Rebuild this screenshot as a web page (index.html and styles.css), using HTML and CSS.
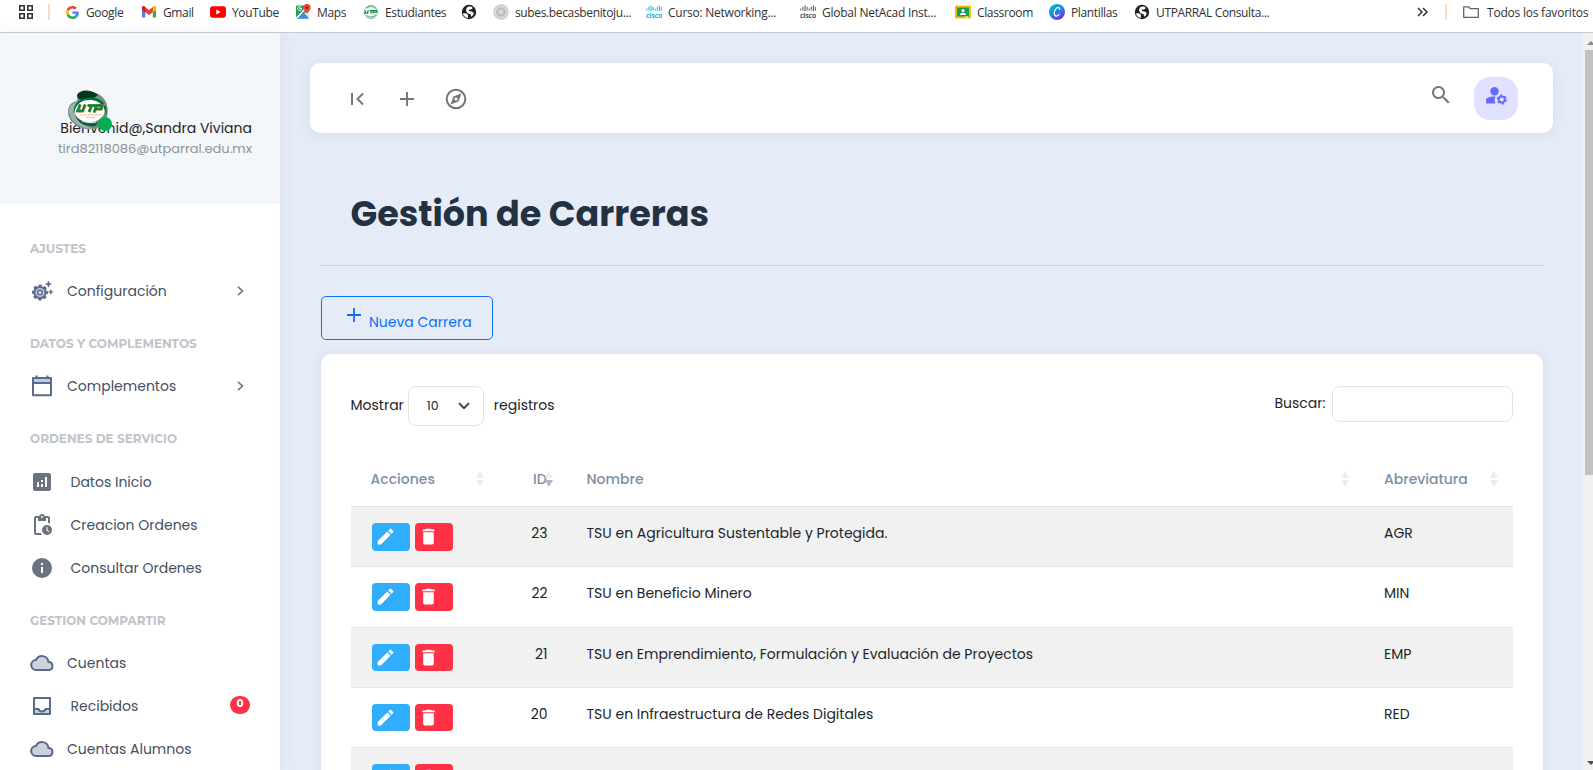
FILE: index.html
```html
<!DOCTYPE html>
<html lang="es">
<head>
<meta charset="utf-8">
<title>Gestión de Carreras</title>
<link rel="stylesheet" href="styles.css">
</head>
<body>
<svg class="defs" width="0" height="0">
  <symbol id="cloud" viewBox="0 0 24 24"><path d="M19.3 10.1A7.5 7.5 0 0 0 5.35 8.05 6 6 0 0 0 6 20h13a5 5 0 0 0 .3-9.9z" fill="#5a6a8a"/><path d="M19 18H6a4 4 0 0 1-.4-7.95l1-.1.5-.95a5.5 5.5 0 0 1 10.3 1.5l.3 1.5 1.5.1A3 3 0 0 1 19 18z" fill="#ccd1dc"/></symbol>
  <symbol id="chevron" viewBox="0 0 10 10"><path d="M2 .8 6.5 5 2 9.2" fill="none" stroke="#5f7a90" stroke-width="1.6"/></symbol>
  <symbol id="pencil" viewBox="0 0 24 24"><path d="M3 17.25V21h3.75L17.81 9.94l-3.75-3.75L3 17.25zM20.71 7.04a1 1 0 0 0 0-1.41l-2.34-2.34a1 1 0 0 0-1.41 0l-1.83 1.83 3.75 3.75 1.83-1.83z" fill="#fff"/></symbol>
  <symbol id="trash" viewBox="0 0 24 24"><path d="M6 19c0 1.1.9 2 2 2h8c1.1 0 2-.9 2-2V7H6v12zM19 4h-3.5l-1-1h-5l-1 1H5v2h14V4z" fill="#fff"/></symbol>
  <symbol id="sort" viewBox="0 0 8 16"><path class="up" d="M0 7 4 0l4 7z"/><path class="down" d="M0 9h8l-4 7z"/></symbol>
  <symbol id="globe" viewBox="0 0 16 16"><circle cx="8" cy="8" r="7.2" fill="#202124"/><path d="M1.8 9.5 5 9.3l2 1.5-.2 3.3C4.500 13.800 2.500 12 1.800 9.500zM7 2.800l3.200-.3 1.600 1.600-1.600 1.300H8.300l-.6 1.500 2.800.5 2.300 1.400-.8 2.400-1.900 1.500-.5-2.400-3-1L5 6.800 5.500 4z" fill="#fff"/></symbol>
  <symbol id="cisco" viewBox="0 0 16 14"><path d="M.8 3.5v2M2.9 1.8v3.7M5 .3v6M7.1 1.8v3.7M9.2 3.5v2M11.3 1.8v3.7M13.4.3v6M15.3 2v3.5" stroke="currentColor" stroke-width="1"/><text x="0" y="12.5" class="cisco-word" textLength="16" lengthAdjust="spacingAndGlyphs">cisco</text></symbol>
</svg>

<nav class="bookmarks">
  <a class="bm"><svg class="i16" viewBox="0 0 16 16"><path d="M1.8 1.8h4.4v4.4H1.8zM9.8 1.8h4.4v4.4H9.8zM1.8 9.8h4.4v4.4H1.8zM9.8 9.8h4.4v4.4H9.8z" fill="none" stroke="#303134" stroke-width="1.6"/></svg></a>
  <i class="bm-sep"></i>
  <a class="bm"><svg class="i14" viewBox="0 0 48 48"><path fill="#EA4335" d="M24 9.5c3.54 0 6.71 1.22 9.21 3.6l6.85-6.85C35.9 2.38 30.47 0 24 0 14.62 0 6.51 5.38 2.56 13.22l7.98 6.19C12.43 13.72 17.74 9.5 24 9.5z"/><path fill="#4285F4" d="M46.98 24.55c0-1.57-.15-3.09-.38-4.55H24v9.02h12.94c-.58 2.96-2.26 5.48-4.78 7.18l7.73 6c4.51-4.18 7.09-10.36 7.09-17.65z"/><path fill="#FBBC05" d="M10.53 28.59a14.5 14.5 0 0 1 0-9.18l-7.98-6.19a24 24 0 0 0 0 21.56l7.98-6.19z"/><path fill="#34A853" d="M24 48c6.48 0 11.93-2.13 15.89-5.81l-7.73-6c-2.15 1.45-4.92 2.3-8.16 2.3-6.26 0-11.57-4.22-13.47-9.91l-7.98 6.19C6.51 42.62 14.62 48 24 48z"/></svg><span>Google</span></a>
  <a class="bm"><svg class="i16" viewBox="0 0 16 16"><path d="M1 13.5V3.8l3.2 2.4v7.3z" fill="#4285f4"/><path d="M11.8 13.5V6.2L15 3.8v9.7z" fill="#34a853"/><path d="M1 6V3.6C1 2.2 2.6 1.8 3.5 2.5L8 5.9l4.5-3.4c.9-.7 2.5-.3 2.5 1.1V6L8 11z" fill="#ea4335"/><path d="M11.8 3v5.4L15 6V3.6c0-1.4-1.6-1.8-2.5-1.1z" fill="#fbbc04"/><path d="M4.2 3v5.4L1 6V3.6c0-1.4 1.6-1.8 2.5-1.1z" fill="#c5221f"/></svg><span>Gmail</span></a>
  <a class="bm"><svg class="i16" viewBox="0 0 16 16"><rect y="2.2" width="16" height="11.6" rx="3" fill="#f00"/><path d="M6.3 5.5v5l4.3-2.5z" fill="#fff"/></svg><span>YouTube</span></a>
  <a class="bm"><svg class="i16" viewBox="0 0 16 16"><rect x="1" y="1.5" width="13" height="13" rx="1" fill="#1e9e5a"/><path d="M2 14.5 8 8.5l6 6z" fill="#4285f4"/><path d="m1.5 14 12-12.5" stroke="#fff" stroke-width="1.6"/><path d="M9 9l5 5.5V7z" fill="#e0e0e0"/><path d="M12 0a3.6 3.6 0 0 0-3.6 3.6C8.4 6.2 12 9.5 12 9.5s3.6-3.3 3.6-5.9A3.6 3.6 0 0 0 12 0z" fill="#ea4335"/><circle cx="12" cy="3.6" r="1.2" fill="#8c1c12"/><path d="M4 4.3h2.6a2 2 0 1 1-.6-1.2" stroke="#fff" fill="none"/></svg><span>Maps</span></a>
  <a class="bm"><svg class="i16" viewBox="0 0 16 16"><circle cx="8" cy="8" r="6.8" fill="#eef7f1" stroke="#9cc7ae"/><path d="M3.5 11.5c3 2.5 7 2 9.5-.5M3.5 4c3-2.5 7-2 9.5.5" stroke="#6fae8b" stroke-width="1.2" fill="none"/><path d="M2.5 6.5 2 9.2h2.5L5.2 6.5M6.5 6.5h3M8 6.5v3M10 9.5v-3h3.5v1.7H10" stroke="#0c8a43" stroke-width="1.2" fill="none"/></svg><span>Estudiantes</span></a>
  <a class="bm"><svg class="i16"><use href="#globe"/></svg></a>
  <a class="bm"><svg class="i16" viewBox="0 0 16 16"><circle cx="8" cy="8" r="7.8" fill="#cfcfcf"/><circle cx="8" cy="8" r="5.5" fill="#bdbdbd" stroke="#e6e6e6"/><path d="M5.5 6.5 8 5l2.5 2L9 10.500 6.500 10z" fill="#d8d8d8"/></svg><span>subes.becasbenitoju...</span></a>
  <a class="bm cyan"><svg class="i16" viewBox="0 0 16 14"><use href="#cisco"/></svg><span>Curso: Networking...</span></a>
  <a class="bm dark"><svg class="i16" viewBox="0 0 16 14"><use href="#cisco"/></svg><span>Global NetAcad Inst...</span></a>
  <a class="bm"><svg class="i16" viewBox="0 0 16 16"><path d="M0 1.5h16v13H0z" fill="#fbbc04"/><path d="M2 3.5h12v9H2z" fill="#0f9d58"/><circle cx="8" cy="6.5" r="1.6" fill="#fff"/><path d="M4.8 11c0-3 6.400-3 6.400 0z" fill="#fff"/><path d="M10 12.5h3v1h-3z" fill="#fff"/></svg><span>Classroom</span></a>
  <a class="bm"><svg class="i16" viewBox="0 0 16 16"><defs><linearGradient id="canva" x1="0" y1="0" x2=".7" y2="1"><stop offset="0" stop-color="#00c4cc"/><stop offset=".5" stop-color="#1a8ee0"/><stop offset="1" stop-color="#7d2ae8"/></linearGradient></defs><circle cx="8" cy="8" r="8" fill="url(#canva)"/><path d="M10.7 5.8c.3-1.3-.4-2.3-1.8-2.1-2 .3-3.700 3.200-3.700 5.600 0 3.400 3.200 3.600 5.200.9" fill="none" stroke="#fff" stroke-width="1.200"/></svg><span>Plantillas</span></a>
  <a class="bm"><svg class="i16"><use href="#globe"/></svg><span>UTPARRAL Consulta...</span></a>
  <a class="bm"><svg class="i16" viewBox="0 0 16 16"><path d="m3 4 4 4-4 4M8 4l4 4-4 4" fill="none" stroke="#303134" stroke-width="1.5"/></svg></a>
  <i class="bm-sep"></i>
  <a class="bm all"><svg class="i16" viewBox="0 0 16 16"><path d="M.7 13.3V2.8h5l1.6 1.8h8v8.700z" fill="none" stroke="#5f6368" stroke-width="1.3" stroke-linejoin="round"/></svg><span>Todos los favoritos</span></a>
</nav>

<div class="app">
  <aside class="sidebar">
    <header class="profile">
      <div class="avatar">
        <svg viewBox="0 0 40 40"><path d="M10 3C18-1 37 1 39.500 17 41 30 34 39 24 39 10 40 0 31 0 22 0 15 4 12 9 11z" fill="#6d9182"/><path d="M9 5c3-6 14-6 21 0 0 0-5 5-13 5-5 0-8-1-8-5z" fill="#00391c"/><path d="M1 20c0 12 12 19 25 19-8-3-18-6-20-18 0-4 1-6 3-9-5 1-8 4-8 8z" fill="#9eb0aa"/><ellipse cx="21.500" cy="21" rx="15" ry="11" fill="#fff"/><path d="M6 24C4 12 16 6 28 8c10 3 12 12 10 18 0-9-6-15.500-16-16.500-9 0-15 5.500-16 14.500z" fill="#00703c"/><path d="M7 25c5 8 16 10 23 7l-2 4c-10 1-18-2-21-11z" fill="#0b5e38"/><path d="M14 31c5 1.500 10 2 14 1" fill="none" stroke="#fff" stroke-width=".9"/><path d="m12.500 14.500-2.500 6.500h5l2.500-6.500M20 15.500h7.500M23.800 15.500l-2.300 6.500M26.500 22.500l2.300-7h6l-1.300 3.500h-5" fill="none" stroke="#e79a3c" stroke-width="3"/><path d="m12 14.500-2.500 6.500h5l2.500-6.500M19.500 15.500h7.500M23.300 15.500l-2.300 6.500M26 22.500l2.300-7h6l-1.300 3.500h-5" fill="none" stroke="#07843f" stroke-width="2.400"/><path d="M12 24.800h22M18.500 27.300h9" stroke="#e9b26a" stroke-width="1" stroke-dasharray="2 .7"/></svg>
        <i class="online"></i>
      </div>
      <div class="who">Bienvenid@,Sandra Viviana</div>
      <div class="mail">tird82118086@utparral.edu.mx</div>
    </header>
    <div class="menu">
      <h6>AJUSTES</h6>
      <a class="item"><svg class="mi gear" viewBox="0 0 24 24"><circle cx="10" cy="13.5" r="5.500" fill="#c3c9d6"/><circle cx="10" cy="13.5" r="5.600" fill="none" stroke="#5a6a8a" stroke-width="2"/><circle cx="10" cy="13.5" r="7" fill="none" stroke="#5a6a8a" stroke-width="2" stroke-dasharray="3.200 2.298" stroke-dashoffset="1.600"/><circle cx="10" cy="13.5" r="2.300" fill="#e3e6ec" stroke="#5a6a8a" stroke-width="1.500"/><path d="m18.500 2 .9 2.200 2.200.9-2.200.9-.9 2.200-.9-2.200-2.200-.9 2.200-.9zM20.800 10.500l.7 1.700 1.700.7-1.700.7-.7 1.700-.7-1.700-1.700-.7 1.700-.7z" fill="#5a6a8a" stroke="#5a6a8a" stroke-width=".5"/></svg><span>Configuración</span><svg class="chev"><use href="#chevron"/></svg></a>
      <h6>DATOS Y COMPLEMENTOS</h6>
      <a class="item"><svg class="mi cal" viewBox="0 0 24 24"><path d="M3.5 4.5h17V9h-17z" fill="#c3c9d6"/><path d="M3 4h18v17.200H3zM3 9h18M6.500 1.500V4M17.500 1.500V4" fill="none" stroke="#5a6a8a" stroke-width="2" stroke-linejoin="round"/></svg><span>Complementos</span><svg class="chev"><use href="#chevron"/></svg></a>
      <h6 class="services">ORDENES DE SERVICIO</h6>
      <a class="item wide"><svg class="mi" viewBox="0 0 24 24"><path d="M19 3H5a2 2 0 0 0-2 2v14c0 1.1.9 2 2 2h14a2 2 0 0 0 2-2V5a2 2 0 0 0-2-2zM9 17H7v-5h2v5zm4 0h-2v-3h2v3zm0-5h-2v-2h2v2zm4 5h-2V7h2v10z" fill="#6b7280"/></svg><span>Datos Inicio</span></a>
      <a class="item wide"><svg class="mi" viewBox="0 0 24 24"><path d="M17 12a5 5 0 1 0 0 10 5 5 0 0 0 0-10zm1.65 7.35L16.5 17.2V14h1v2.79l1.85 1.85-.7.71zM18 3h-3.18a3 3 0 0 0-5.64 0H6a2 2 0 0 0-2 2v15c0 1.1.9 2 2 2h6.11a6.7 6.7 0 0 1-1.42-2H6V5h2v3h8V5h2v5.08c.71.1 1.38.31 2 .6V5a2 2 0 0 0-2-2zm-6 2a1 1 0 1 1 0-2 1 1 0 0 1 0 2z" fill="#6b7280"/></svg><span>Creacion Ordenes</span></a>
      <a class="item wide"><svg class="mi" viewBox="0 0 24 24"><path d="M12 2a10 10 0 1 0 0 20 10 10 0 0 0 0-20zm1 15h-2v-6h2v6zm0-8h-2V7h2v2z" fill="#6b7280"/></svg><span>Consultar Ordenes</span></a>
      <h6>GESTION COMPARTIR</h6>
      <a class="item"><svg class="mi"><use href="#cloud"/></svg><span>Cuentas</span></a>
      <a class="item wide"><svg class="mi" viewBox="0 0 24 24"><path d="M4 15h4l2 2.5h4l2-2.5h4v5H4z" fill="#ccd1dc"/><path d="M4 4h16v16H4zM4 15h4.5c.8 3.3 6.2 3.3 7 0H20" fill="none" stroke="#5a6a8a" stroke-width="2" stroke-linejoin="round"/></svg><span>Recibidos</span><b class="count">0</b></a>
      <a class="item"><svg class="mi"><use href="#cloud"/></svg><span>Cuentas Alumnos</span></a>
    </div>
  </aside>

  <main class="content">
    <div class="topbar">
      <svg class="ti" viewBox="0 0 24 24"><path d="M6 6v12M17 6.5 11.500 12l5.500 5.500" fill="none" stroke="#757575" stroke-width="2"/></svg>
      <svg class="ti" viewBox="0 0 24 24"><path d="M12 5v14M5 12h14" stroke="#757575" stroke-width="1.900"/></svg>
      <svg class="ti" viewBox="0 0 24 24"><circle cx="12" cy="12" r="9.300" fill="none" stroke="#757575" stroke-width="2"/><path fill-rule="evenodd" d="m6.500 17.500 3-8L17.500 6.500l-3 8zM12 10.500a1.500 1.500 0 1 0 0 3 1.500 1.500 0 0 0 0-3z" fill="#757575"/></svg>
      <svg class="ti search" viewBox="0 0 24 24"><path d="M15.500 14h-.79l-.28-.27A6.500 6.500 0 1 0 13.730 14.430l.27.280v.79l5 4.990L20.490 19l-4.990-5zm-6 0a4.500 4.500 0 1 1 0-9 4.500 4.500 0 0 1 0 9z" fill="#757575"/></svg>
      <div class="user"><svg viewBox="0 0 21 18"><circle cx="8.500" cy="4.300" r="4.200" fill="#666cff"/><path d="M0 16.500v-3C0 10.500 4 9.200 9.500 9.500c-1.200 2.500-1 5 .1 7z" fill="#666cff"/><circle cx="15.800" cy="12.500" r="3" fill="none" stroke="#666cff" stroke-width="1.900"/><circle cx="15.800" cy="12.500" r="4.300" fill="none" stroke="#666cff" stroke-width="1.600" stroke-dasharray="2.250 2.250"/></svg></div>
    </div>

    <section class="page">
      <h1>Gestión de Carreras</h1>
      <hr>
      <button class="new"><svg viewBox="0 0 16 16"><path d="M8 1v14M1 8h14" stroke="#0d6efd" stroke-width="1.800"/></svg><span>Nueva Carrera</span></button>

      <div class="card">
        <div class="tools">
          <span class="txt">Mostrar</span>
          <div class="select"><span>10</span><svg viewBox="0 0 12 8"><path d="m1 1.200 5 5 5-5" fill="none" stroke="#343a40" stroke-width="1.700"/></svg></div>
          <span class="txt">registros</span>
          <label>Buscar:</label><input type="text">
        </div>
        <div class="table">
          <div class="tr head">
            <div class="th">Acciones<svg class="sort"><use href="#sort"/></svg></div>
            <div class="th id">ID<svg class="sort desc"><use href="#sort"/></svg></div>
            <div class="th name-col">Nombre<svg class="sort"><use href="#sort"/></svg></div>
            <div class="th abr-col">Abreviatura<svg class="sort"><use href="#sort"/></svg></div>
          </div>
          <div class="tr odd"><div class="acts"><button class="edit"><svg><use href="#pencil"/></svg></button><button class="del"><svg><use href="#trash"/></svg></button></div><div class="num">23</div><div class="name">TSU en Agricultura Sustentable y Protegida.</div><div class="abr">AGR</div></div>
          <div class="tr"><div class="acts"><button class="edit"><svg><use href="#pencil"/></svg></button><button class="del"><svg><use href="#trash"/></svg></button></div><div class="num">22</div><div class="name">TSU en Beneficio Minero</div><div class="abr">MIN</div></div>
          <div class="tr odd"><div class="acts"><button class="edit"><svg><use href="#pencil"/></svg></button><button class="del"><svg><use href="#trash"/></svg></button></div><div class="num">21</div><div class="name">TSU en Emprendimiento, Formulación y Evaluación de Proyectos</div><div class="abr">EMP</div></div>
          <div class="tr"><div class="acts"><button class="edit"><svg><use href="#pencil"/></svg></button><button class="del"><svg><use href="#trash"/></svg></button></div><div class="num">20</div><div class="name">TSU en Infraestructura de Redes Digitales</div><div class="abr">RED</div></div>
          <div class="tr odd"><div class="acts"><button class="edit"><svg><use href="#pencil"/></svg></button><button class="del"><svg><use href="#trash"/></svg></button></div></div>
        </div>
      </div>
    </section>
  </main>

  <div class="scroll"><i class="arrow-up"></i><i class="thumb"></i><i class="arrow-down"></i></div>
</div>
</body>
</html>
```
FILE: styles.css
```css
* { box-sizing: border-box; }
body {
  margin: 0;
  width: 1593px;
  height: 770px;
  overflow: hidden;
  display: flex;
  flex-direction: column;
  background: #e5ebf7;
  color: #212529;
  font-family: Poppins, Inter, sans-serif;
  font-size: 14px;
}
.defs { display: none; }
svg { display: block; flex: none; }
button { font: inherit; border: 0; padding: 0; }

/* Bookmarks bar */
.bookmarks {
  flex: none;
  height: 33px;
  padding: 0 0 8px 18px;
  background: #fff;
  border-bottom: 1px solid #c8cacd;
  display: grid;
  grid-template-columns: 30px 18px 75px 69px 85px 68px 98px 32px 153px 154px 155px 94px 85px 281px 30px 18px 130px;
  align-items: center;
  font: 12px "Open Sans", sans-serif;
  color: #303134;
}
.bm { display: flex; align-items: center; gap: 6px; white-space: nowrap; letter-spacing: -.36px; }
.all { letter-spacing: -.22px; gap: 8px; }
.i16 { width: 16px; height: 16px; }
.i14 { width: 13px; height: 13px; margin: 0 1px 0 0; }
.bm-sep { width: 2px; height: 16px; background: #ffd9c7; }
.cyan svg { color: #15b5d8; fill: #15b5d8; }
.dark svg { color: #555; fill: #555; }
.cyan, .dark { letter-spacing: -.25px; }
.cisco-word { font: 700 7px "Open Sans", sans-serif; }

.app { flex: 1; min-height: 0; display: flex; }

/* Sidebar */
.sidebar { width: 280px; background: #fff; overflow: hidden; flex: none; box-shadow: 0 0 16px rgba(60, 80, 140, .07); }
.profile { height: 171px; background: #f3f7fa; padding: 57px 28px 0 0; text-align: right; }
.avatar { position: relative; width: 40px; height: 40px; margin-left: 68px; z-index: 1; }
.avatar svg { width: 40px; height: 40px; }
.online { position: absolute; left: 30px; top: 27px; width: 14px; height: 14px; border-radius: 50%; background: #00b050; }
.who { margin-top: -13px; line-height: 22px; white-space: nowrap; }
.mail { line-height: 20px; font-size: 13px; color: #8f9396; white-space: nowrap; }
.menu { padding-top: 14px; color: #444f62; }
h6 { margin: 0; height: 52px; padding: 21px 0 0 30px; font: 700 12px/20px Montserrat, Inter, sans-serif; color: #bfc3cb; white-space: nowrap; }
.services { height: 53px; }
.item { display: flex; align-items: center; height: 43px; padding: 0 34px 0 30px; gap: 13px; white-space: nowrap; }
.wide { gap: 16.5px; }
.mi { width: 24px; height: 24px; margin-top: -1px; }
.gear, .cal { margin-top: -2px; }
.chev { width: 10px; height: 10px; margin: -2px 0 0 auto; }
.count { margin: -3px -4px 0 auto; width: 20px; height: 18px; border-radius: 9px; background: #ff3147; color: #fff; font-size: 11px; line-height: 15px; text-align: center; }

/* Content */
.content { flex: 1; min-width: 0; padding: 30px 30px 0; overflow: hidden; }
.topbar { height: 70px; border-radius: 10px; background: #fff; box-shadow: 0 2px 14px rgba(60, 80, 140, .09); padding: 2px 35px 0 36px; display: flex; align-items: center; gap: 25px; }
.ti { width: 24px; height: 24px; }
.search { margin: -9px -4px 0 auto; }
.user { width: 44px; height: 43px; margin-top: -2px; border-radius: 16px; background: #e1e2ff; display: flex; justify-content: center; padding-top: 10px; }
.user svg { width: 21px; height: 18px; }
.page { padding: 0 10px 0 11px; }
h1 { margin: 0; padding: 55px 0 0 29.5px; height: 132px; font-size: 35px; line-height: 52px; font-weight: 700; color: #233142; white-space: nowrap; }
hr { margin: 0; border: 0; height: 1px; background: #c9d2ea; }
.new { margin: 30px 0 14px; width: 172px; height: 44px; border: 1px solid #0d6efd; border-radius: 5px; background: none; color: #0d6efd; display: flex; padding: 10px 0 0 23.5px; gap: 7.5px; }
.new svg { width: 16px; height: 16px; }
.new span { line-height: 20px; margin-top: 5px; white-space: nowrap; }
.card { height: 600px; background: #fff; border-radius: 10px; box-shadow: 0 2px 14px rgba(60, 80, 140, .09); padding: 32px 30px 0 29.5px; }
.tools { display: flex; align-items: center; height: 40px; white-space: nowrap; }
.txt { margin-top: -2px; }
.select { width: 76px; height: 40px; margin: 0 9.5px 0 4.5px; border: 1px solid #dfe2e6; border-radius: 8px; display: flex; align-items: center; justify-content: space-between; padding: 0 13px 0 17.5px; font-size: 12.5px; }
.select svg { width: 12px; height: 8px; }
.tools label { margin: -6px 6.5px 0 auto; }
.tools input { width: 181px; height: 36px; margin-top: -4px; border: 1px solid #dfe2e6; border-radius: 8px; background: #fff; }

.tr { display: grid; grid-template-columns: 150px 86px 796.5px 1fr; height: 60.3px; border-top: 1px solid #dee5ec; }
.odd { background: #f1f1f1; }
.head { height: 80px; border: 0; font-weight: 500; color: #7b8fa3; }
.th { position: relative; padding: 43px 0 0 20px; line-height: 20px; }
.th.id { padding-left: 32.5px; }
.th.name-col { padding-left: 0; }
.th.abr-col { padding-left: 1px; }
.sort { position: absolute; right: 15px; top: 45px; width: 8px; height: 16px; fill: #e9edf0; }
.th:first-child .sort { right: 17px; }
.name-col .sort { right: 34px; }
.th .desc { right: 34px; --down: #a9b8c2; }
.down { fill: var(--down, #e9edf0); }
.acts { display: flex; gap: 5px; padding: 16px 0 0 21px; }
.acts button { width: 38px; height: 27.5px; border-radius: 4px; padding: 0 0 0 3.5px; display: flex; align-items: flex-start; }
.acts svg { width: 21px; height: 21px; margin-top: 3px; }
.edit { background: #30aefc; }
.del { background: #ff3147; }
.num { text-align: right; padding: 16px 39px 0 0; line-height: 20px; }
.name { padding-top: 16px; line-height: 20px; }
.abr { padding: 16px 0 0 1px; line-height: 20px; }

/* Window scrollbar */
.scroll { width: 10px; flex: none; background: #f0f0f0; display: flex; flex-direction: column; align-items: flex-end; overflow: hidden; }
.arrow-up { margin: 8px -2px 5px 0; border: 4px solid transparent; border-top: 0; border-bottom: 4px solid #8a8a8a; }
.thumb { width: 8px; height: 425px; background: #c1c1c1; }
.arrow-down { margin: auto -2px 5px 0; border: 4px solid transparent; border-bottom: 0; border-top: 4px solid #505050; }
```
